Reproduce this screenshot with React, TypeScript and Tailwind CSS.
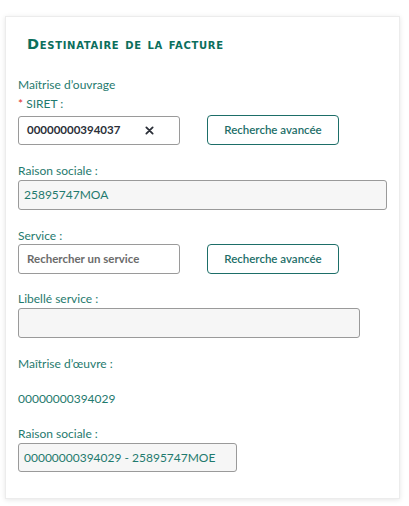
import React from 'react';

const teal = 'text-[#1f7a6e]';

const Label: React.FC<{ children: React.ReactNode; className?: string }> = ({ children, className = '' }) => (
  <div className={`h-[14px] text-[12px] leading-[14px] ${teal} ${className}`}>{children}</div>
);

const AdvancedButton: React.FC = () => (
  <button className="ml-[27px] flex h-[30px] w-[132px] items-center justify-center rounded-[4px] border border-[#1d6e68] bg-white text-[11.5px] font-semibold text-[#1d6e68]">
    Recherche avancée
  </button>
);

const App: React.FC = () => {
  return (
    <div className="min-h-[506px] bg-white pt-[16px] pl-[5px]" style={{ fontFamily: 'Lato, "Open Sans", sans-serif' }}>
      <div className="flex w-[395px] flex-col border border-[#ececec] bg-white pt-[19px] pb-[26px] pl-[12px] shadow-[0_1px_5px_rgba(0,0,0,0.1)]">
        <h2
          className="ml-[9px] h-[16px] text-[14.5px] leading-[16px] font-bold tracking-[0.7px] text-[#0b6e5c] [font-variant:small-caps]"
          style={{ fontFamily: '"DejaVu Sans", sans-serif' }}
        >
          Destinataire de la facture
        </h2>

        <Label className="mt-[26px]">Maîtrise d’ouvrage</Label>
        <Label className="mt-[5px]">
          <span className="text-[#e0302a]">*</span> SIRET :
        </Label>
        <div className="mt-[4px] flex items-center">
          <div className="flex h-[29px] w-[162px] items-center justify-between rounded-[3px] border border-[#9a9a9a] bg-white pr-[25px] pl-[8px]">
            <span className="text-[11.5px] font-bold text-[#2b2f38]">00000000394037</span>
            <svg width="9" height="9" viewBox="0 0 10 10" className="text-[#2b2f38]">
              <path d="M1.5 1.5 L8.5 8.5 M8.5 1.5 L1.5 8.5" stroke="currentColor" strokeWidth="2" strokeLinecap="round" />
            </svg>
          </div>
          <AdvancedButton />
        </div>

        <Label className="mt-[19px]">Raison sociale :</Label>
        <div className={`mt-[2px] flex h-[30px] w-[369px] items-center rounded-[3px] border border-[#9a9a9a] bg-[#f6f6f6] pl-[5px] text-[12px] ${teal}`}>
          25895747MOA
        </div>

        <Label className="mt-[19px]">Service :</Label>
        <div className="mt-[1px] flex items-center">
          <div className="flex h-[30px] w-[162px] items-center rounded-[3px] border border-[#9a9a9a] bg-white pl-[8px]">
            <span className="text-[11.5px] font-bold text-[#6b6b6b]">Rechercher un service</span>
          </div>
          <AdvancedButton />
        </div>

        <Label className="mt-[18px]">Libellé service :</Label>
        <div className="mt-[2px] h-[30px] w-[342px] rounded-[3px] border border-[#9a9a9a] bg-[#f6f6f6]" />

        <Label className="mt-[19px]">Maîtrise d’œuvre :</Label>
        <Label className="mt-[21px]">00000000394029</Label>
        <Label className="mt-[21px]">Raison sociale :</Label>
        <div className={`mt-[2px] flex h-[29px] w-[219px] items-center rounded-[3px] border border-[#9a9a9a] bg-[#f6f6f6] pl-[5px] text-[12px] ${teal}`}>
          00000000394029 - 25895747MOE
        </div>
      </div>
    </div>
  );
};

export default App;
